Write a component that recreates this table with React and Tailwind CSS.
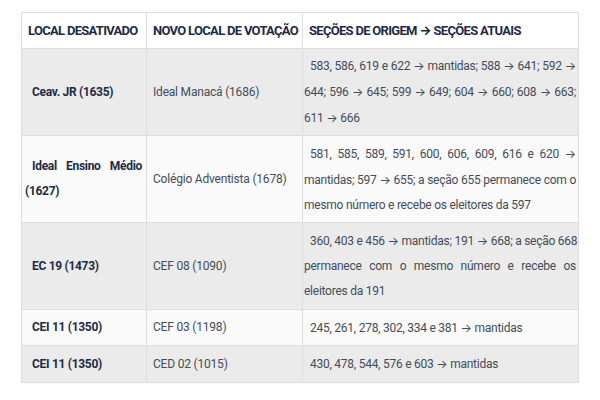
import React from 'react';

const rows = [
  {
    local: ['Ceav. JR (1635)'],
    novo: 'Ideal Manacá (1686)',
    secoes: [
      '583, 586, 619 e 622 → mantidas; 588 → 641; 592 →',
      '644; 596 → 645; 599 → 649; 604 → 660; 608 → 663;',
      '611 → 666',
    ],
    h: 'h-[87px]',
    bg: 'bg-[#ebebeb]',
  },
  {
    local: ['Ideal Ensino Médio', '(1627)'],
    novo: 'Colégio Adventista (1678)',
    secoes: [
      '581, 585, 589, 591, 600, 606, 609, 616 e 620 →',
      'mantidas; 597 → 655; a seção 655 permanece com o',
      'mesmo número e recebe os eleitores da 597',
    ],
    h: 'h-[87px]',
    bg: 'bg-[#fafafa]',
  },
  {
    local: ['EC 19 (1473)'],
    novo: 'CEF 08 (1090)',
    secoes: [
      '360, 403 e 456 → mantidas; 191 → 668; a seção 668',
      'permanece com o mesmo número e recebe os',
      'eleitores da 191',
    ],
    h: 'h-[87px]',
    bg: 'bg-[#ebebeb]',
  },
  {
    local: ['CEI 11 (1350)'],
    novo: 'CEF 03 (1198)',
    secoes: ['245, 261, 278, 302, 334 e 381 → mantidas'],
    h: 'h-[36px]',
    bg: 'bg-[#fafafa]',
  },
  {
    local: ['CEI 11 (1350)'],
    novo: 'CED 02 (1015)',
    secoes: ['430, 478, 544, 576 e 603 → mantidas'],
    h: 'h-[37px]',
    bg: 'bg-[#ebebeb]',
  },
];

// Roboto has no arrow of its own, Inter's is the compact one
const withArrows = (text) =>
  text.split('→').map((part, i) => (
    <React.Fragment key={i}>
      {i > 0 && <span style={{ fontFamily: 'Inter, sans-serif' }}>→</span>}
      {part}
    </React.Fragment>
  ));

// one block per line so the wraps stay where the original has them
const Lines = ({ lines, first = 'pl-[6px]' }) => (
  <div>
    {lines.map((l, i) => (
      <div
        key={i}
        className={`${i === 0 ? first : ''} ${
          i < lines.length - 1 ? 'text-justify [text-align-last:justify]' : 'text-left'
        }`}
      >
        {withArrows(l)}
      </div>
    ))}
  </div>
);

export default function App() {
  return (
    <div
      className="w-[600px] h-[400px] bg-white pt-[12px] pl-[21px]"
      style={{ fontFamily: 'Roboto, "Liberation Sans", sans-serif' }}
    >
      <table className="table-fixed border-collapse w-[557px]">
        <colgroup>
          <col className="w-[125px]" />
          <col className="w-[156px]" />
          <col className="w-[276px]" />
        </colgroup>
        <thead>
          <tr className="h-[36px] bg-white">
            {['LOCAL DESATIVADO', 'NOVO LOCAL DE VOTAÇÃO', 'SEÇÕES DE ORIGEM → SEÇÕES ATUAIS'].map((t) => (
              <th
                key={t}
                className="border border-[#dedede] px-[6px] text-left align-middle text-[13px] font-bold tracking-[-0.7px] text-[#1f2a44] whitespace-nowrap"
              >
                {withArrows(t)}
              </th>
            ))}
          </tr>
        </thead>
        <tbody>
          {rows.map((r, i) => (
            <tr key={i} className={`${r.h} ${r.bg}`}>
              <td className="border border-[#dedede] pl-[3px] pr-[4px] align-middle text-[12px] leading-[25px] font-bold tracking-[-0.3px] text-[#1f2a44]">
                <Lines lines={r.local} first="pl-[7px]" />
              </td>
              <td className="border border-[#dedede] px-[6px] align-middle text-[12px] leading-[25px] tracking-[-0.2px] text-[#454c5a]">
                {r.novo}
              </td>
              <td className="border border-[#dedede] pl-[1px] pr-[2px] align-middle text-[12px] leading-[25px] tracking-[-0.25px] text-[#454c5a] whitespace-nowrap">
                <Lines lines={r.secoes} />
              </td>
            </tr>
          ))}
        </tbody>
      </table>
    </div>
  );
}
